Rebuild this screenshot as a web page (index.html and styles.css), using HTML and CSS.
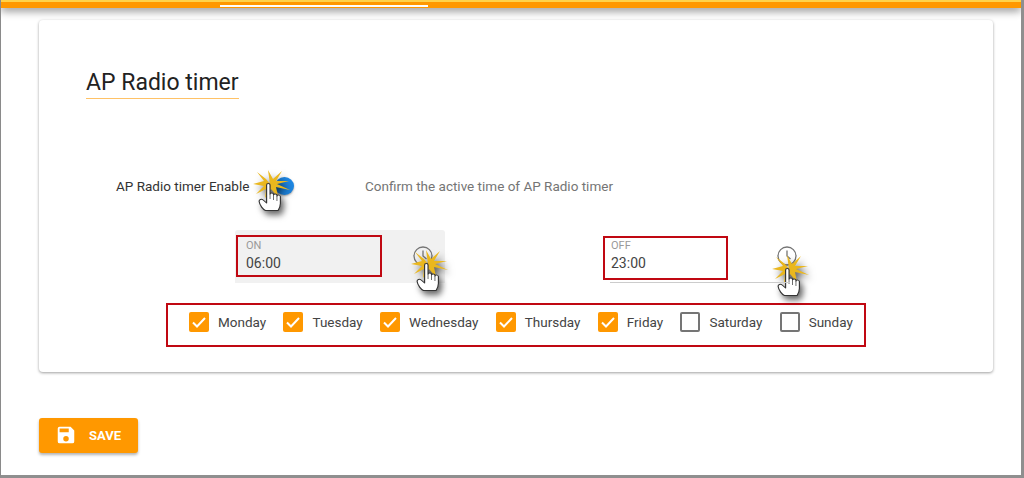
FILE: index.html
```html
<!DOCTYPE html>
<html lang="en">
<head>
    <meta charset="UTF-8">
    <meta name="viewport" content="width=device-width, initial-scale=1.0">
    <title>AP Radio timer</title>
    <link rel="stylesheet" href="styles.css">
</head>
<body>
    <svg class="defs" width="0" height="0">
        <symbol id="pointer" viewBox="0 0 50 52">
            <polygon fill="#eab71e" points="21,17 19,3 24,12 33,4 27,14 40,14 28,17 41,23 27,20 29,30 22,22 16,31 17,22 7,27 15,19 4,17 15,14 8,5 17,12"/>
            <g transform="translate(1.500 4) scale(1.150 1)">
                <path fill="#fff" stroke="#333" stroke-width="1" stroke-linejoin="round" d="M14 14c0-2 3-2 3 0v9c0-1.500 3-1.500 3 0v1c0-1.500 3-1.500 3 0v1c0-1.500 3-1 3 .5v7c0 3-1 5-2 7H13c-2-1-5-5-5.500-9-.2-2 2-3 3.500-1.500l3 3z"/>
                <path fill="none" stroke="#555" stroke-width=".8" d="M17 23v5M20 24v5M23 25v5"/>
            </g>
        </symbol>
        <symbol id="clock" viewBox="0 0 20 20">
            <circle cx="10" cy="10" r="9" fill="none" stroke="#757575" stroke-width="1.300"/>
            <path fill="none" stroke="#757575" stroke-width="1.300" d="M10 4.500V10l3.500 3"/>
        </symbol>
    </svg>

    <div class="frame">
        <header class="topbar"><span class="tab-line"></span></header>
        <main class="content">
            <section class="card">
                <h1 class="title">AP Radio timer</h1>

                <div class="enable-row">
                    <span class="enable-label">AP Radio timer Enable</span>
                    <span class="toggle">
                        <span class="knob"></span>
                        <svg class="pointer pointer-toggle"><use href="#pointer"/></svg>
                    </span>
                    <span class="hint">Confirm the active time of AP Radio timer</span>
                </div>

                <div class="time-row">
                    <div class="time-field time-on">
                        <div class="red-box on-box">
                            <label>ON</label>
                            <span class="value">06:00</span>
                        </div>
                        <span class="clock-btn clock-on">
                            <svg class="clock"><use href="#clock"/></svg>
                            <svg class="pointer pointer-on"><use href="#pointer"/></svg>
                        </span>
                    </div>
                    <div class="time-field time-off">
                        <div class="red-box off-box">
                            <label>OFF</label>
                            <span class="value">23:00</span>
                        </div>
                        <span class="clock-btn clock-off">
                            <svg class="clock"><use href="#clock"/></svg>
                            <svg class="pointer pointer-off"><use href="#pointer"/></svg>
                        </span>
                    </div>
                </div>

                <div class="days red-box">
                    <div class="day"><span class="box checked"><svg viewBox="0 0 20 20"><path d="M4 10.500l4 4 8-8.500"/></svg></span>Monday</div>
                    <div class="day"><span class="box checked"><svg viewBox="0 0 20 20"><path d="M4 10.500l4 4 8-8.500"/></svg></span>Tuesday</div>
                    <div class="day"><span class="box checked"><svg viewBox="0 0 20 20"><path d="M4 10.500l4 4 8-8.500"/></svg></span>Wednesday</div>
                    <div class="day"><span class="box checked"><svg viewBox="0 0 20 20"><path d="M4 10.500l4 4 8-8.500"/></svg></span>Thursday</div>
                    <div class="day"><span class="box checked"><svg viewBox="0 0 20 20"><path d="M4 10.500l4 4 8-8.500"/></svg></span>Friday</div>
                    <div class="day"><span class="box"></span>Saturday</div>
                    <div class="day"><span class="box"></span>Sunday</div>
                </div>
            </section>

            <button class="save">
                <svg viewBox="0 0 24 24"><path fill="#fff" d="M17 3H5a2 2 0 0 0-2 2v14a2 2 0 0 0 2 2h14a2 2 0 0 0 2-2V7zm-5 16a3 3 0 1 1 0-6 3 3 0 0 1 0 6zm3-10H5V5h10z"/></svg>
                SAVE
            </button>
        </main>
    </div>
</body>
</html>
```

FILE: styles.css
```css
* {
    box-sizing: border-box;
}
html, body {
    margin: 0;
    height: 100%;
    overflow: hidden;
}
body {
    font-family: Roboto, "Liberation Sans", sans-serif;
    background: #fff;
    color: #333;
}
.defs {
    position: absolute;
}
.frame {
    height: 478px;
    background: #fff;
    border-left: 1px solid #8a8a8a;
    border-right: 3px solid #8f8f8f;
    border-bottom: 3px solid #8f8f8f;
    overflow: hidden;
}
.topbar {
    position: relative;
    height: 8px;
    background: #ff9800;
    border-top: 2px solid #ffd24a;
    box-shadow: 0 3px 8px rgba(0, 0, 0, .45);
}
.tab-line {
    position: absolute;
    left: 219px;
    bottom: 1px;
    width: 208px;
    height: 2px;
    background: #fff;
}
.content {
    padding: 12px 0 0 38px;
}
.card {
    width: 954px;
    height: 352px;
    padding: 49px 0 0 47px;
    background: #fff;
    border-radius: 4px;
    box-shadow: 0 1px 3px rgba(0, 0, 0, .38);
}
.title {
    display: inline-block;
    margin: 0;
    padding-bottom: 2px;
    font-size: 23px;
    line-height: 27px;
    font-weight: 400;
    color: #222;
    border-bottom: 1px solid #ffc266;
}
.enable-row {
    display: flex;
    align-items: center;
    height: 20px;
    margin: 77px 0 0 30px;
    font-size: 13.500px;
}
.enable-label {
    width: 134px;
    white-space: nowrap;
}
.toggle {
    position: relative;
    width: 115px;
    height: 20px;
}
.knob {
    position: absolute;
    left: 25px;
    top: 1px;
    width: 19px;
    height: 18px;
    border-radius: 50%;
    background: #1e88e5;
    box-shadow: 0 1px 2px rgba(0, 0, 0, .35);
}
.hint {
    color: #757575;
    white-space: nowrap;
}
.time-row {
    display: flex;
    height: 53px;
    margin: 34px 0 0 149px;
}
.time-field {
    position: relative;
    display: flex;
}
.time-on {
    width: 210px;
    height: 53px;
    padding: 5px 0 0 1px;
    background: #f1f1f1;
    border-radius: 3px 3px 0 0;
}
.time-off {
    width: 187px;
    height: 53px;
    margin-left: 158px;
    padding: 6px 0 0 0;
}
.time-off::after {
    content: "";
    position: absolute;
    left: 7px;
    right: 0;
    bottom: 0;
    height: 1px;
    background: #ccc;
}
.red-box {
    border: 2px solid #c00812;
}
.on-box, .off-box {
    display: flex;
    flex-direction: column;
    padding: 2px 0 0 8px;
}
.on-box {
    width: 146px;
    height: 42px;
}
.off-box {
    width: 125px;
    height: 44px;
    padding: 1px 0 0 6px;
}
.on-box label, .off-box label {
    font-size: 11px;
    line-height: 13px;
    color: #999;
}
.value {
    font-size: 14px;
    line-height: 20px;
    margin-top: 1px;
    color: #444;
}
.clock-btn {
    position: absolute;
    top: 16px;
    width: 20px;
    height: 20px;
}
.clock-on {
    left: 178px;
}
.clock-off {
    left: 174px;
}
.clock {
    display: block;
    width: 20px;
    height: 20px;
}
.pointer {
    position: absolute;
    width: 50px;
    height: 52px;
    filter: drop-shadow(3px 4px 3px rgba(0, 0, 0, .6));
}
.pointer-toggle {
    left: -1px;
    top: -9px;
}
.pointer-on {
    left: -6px;
    top: 1px;
}
.pointer-off {
    left: -9px;
    top: 6px;
}
.days {
    display: flex;
    align-items: flex-start;
    width: 700px;
    height: 44px;
    margin: 20px 0 0 80px;
    padding: 7px 0 0 21px;
    font-size: 13.500px;
    color: #444;
}
.day {
    display: flex;
    align-items: center;
    height: 20px;
    white-space: nowrap;
    margin-right: 17.300px;
}
.box {
    width: 20px;
    height: 20px;
    margin-right: 9px;
    border: 2px solid #757575;
    border-radius: 2px;
}
.box.checked {
    background: #ff9800;
    border: 0;
}
.box svg {
    display: block;
    width: 20px;
    height: 20px;
    fill: none;
    stroke: #fff;
    stroke-width: 2;
}
.save {
    display: flex;
    align-items: center;
    width: 99px;
    height: 35px;
    margin-top: 46px;
    padding: 0 0 1px 16px;
    font-family: inherit;
    font-size: 13px;
    font-weight: 700;
    color: #fff;
    background: #ff9800;
    border: 0;
    border-radius: 3px;
    box-shadow: 0 2px 3px rgba(0, 0, 0, .3);
}
.save svg {
    width: 22px;
    height: 22px;
    margin-right: 12px;
}
```
